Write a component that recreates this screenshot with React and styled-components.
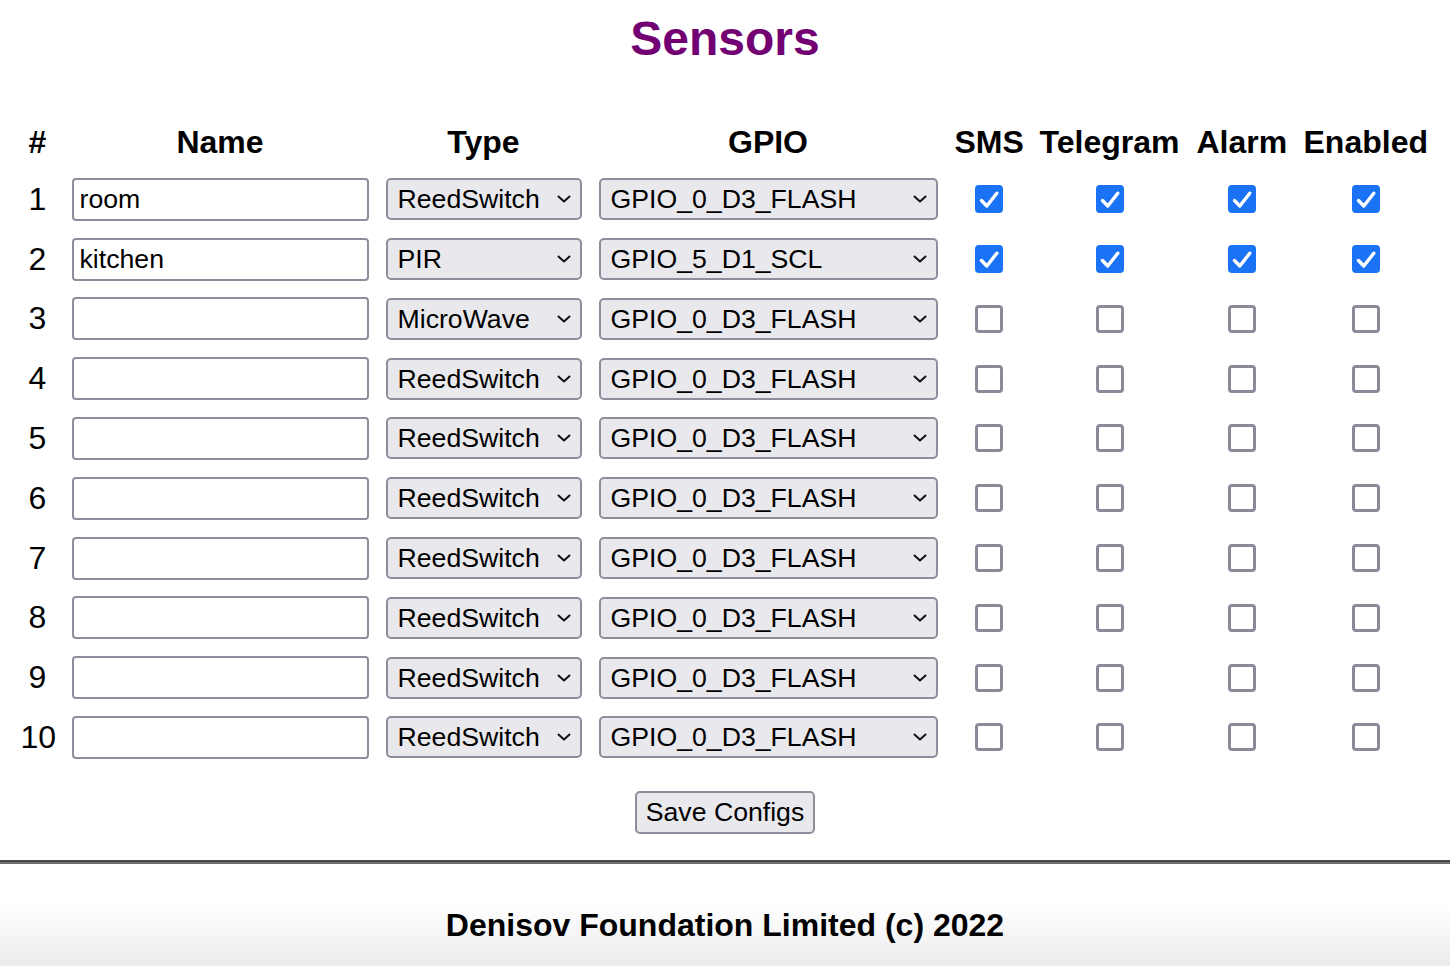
import styled, { createGlobalStyle } from 'styled-components'

const GlobalStyle = createGlobalStyle`
  body {
    margin: 0;
    background: #fff;
    font-family: "Liberation Sans", Arial, sans-serif;
    color: #000;
  }
`

const types = ['ReedSwitch', 'PIR', 'MicroWave']
const pins = ['GPIO_0_D3_FLASH', 'GPIO_5_D1_SCL', 'GPIO_4_D2_SDA', 'GPIO_12_D6', 'GPIO_13_D7', 'GPIO_14_D5']
const flags = ['SMS', 'Telegram', 'Alarm', 'Enabled']

const sensors = [
  { name: 'room', type: 'ReedSwitch', pin: 'GPIO_0_D3_FLASH', on: true },
  { name: 'kitchen', type: 'PIR', pin: 'GPIO_5_D1_SCL', on: true },
  { name: '', type: 'MicroWave', pin: 'GPIO_0_D3_FLASH', on: false },
  ...Array.from({ length: 7 }, () => ({ name: '', type: 'ReedSwitch', pin: 'GPIO_0_D3_FLASH', on: false })),
]

function Chevron() {
  return (
    <ChevronIcon width="14" height="8" viewBox="0 0 14 8">
      <path d="M1.5 1.5 L7 6.5 L12.5 1.5" fill="none" stroke="#111" strokeWidth="2" strokeLinecap="round" strokeLinejoin="round" />
    </ChevronIcon>
  )
}

function Dropdown({ options, value, width }) {
  return (
    <SelectWrap $width={width}>
      <Select defaultValue={value}>
        {options.map(o => <option key={o}>{o}</option>)}
      </Select>
      <Chevron />
    </SelectWrap>
  )
}

function Check({ checked }) {
  return (
    <CheckBox $checked={checked}>
      <input type="checkbox" defaultChecked={checked} />
      {checked && (
        <svg width="28" height="28" viewBox="0 0 28 28">
          <path d="M6.5 15.5 L11.8 21 L21.8 8.2" fill="none" stroke="#fff" strokeWidth="3.4" strokeLinecap="round" strokeLinejoin="round" />
        </svg>
      )}
    </CheckBox>
  )
}

function App() {
  return (
    <>
      <GlobalStyle />
      <Page>
        <Title>Sensors</Title>
        <Table>
          <Row>
            <Head>#</Head>
            <Head>Name</Head>
            <Head>Type</Head>
            <Head>GPIO</Head>
            {flags.map(f => <Head key={f}>{f}</Head>)}
          </Row>
          {sensors.map((s, i) => (
            <Row key={i}>
              <Num>{i + 1}</Num>
              <Cell><NameInput type="text" defaultValue={s.name} /></Cell>
              <Cell><Dropdown options={types} value={s.type} width={196} /></Cell>
              <Cell><Dropdown options={pins} value={s.pin} width={339} /></Cell>
              {flags.map(f => <Cell key={f}><Check checked={s.on} /></Cell>)}
            </Row>
          ))}
        </Table>
        <Actions>
          <SaveButton>Save Configs</SaveButton>
        </Actions>
      </Page>
      <Divider />
      <Footer>Denisov Foundation Limited (c) 2022</Footer>
    </>
  )
}

export default App

const Page = styled.div`
  padding-top: 11px;
  padding-bottom: 26px;
`

const Title = styled.h1`
  margin: 0;
  text-align: center;
  font-size: 48px;
  font-weight: bold;
  color: #720073;
  line-height: 55px;
`

const Table = styled.div`
  margin-top: 58px;
  display: flex;
  flex-direction: column;
  align-items: center;
  row-gap: 16.8px;
`

const Row = styled.div`
  display: grid;
  grid-template-columns: 34px 297px 196px 339px 68px 140px 90px 124px;
  column-gap: 17px;
  align-items: center;
  margin-left: -2px;
`

const Head = styled.div`
  text-align: center;
  font-size: 32px;
  font-weight: bold;
  line-height: 37px;
  white-space: nowrap;
`

const Cell = styled.div`
  display: flex;
  justify-content: center;
  align-items: center;
`

const Num = styled.div`
  text-align: center;
  font-size: 32px;
  line-height: 37px;
`

const NameInput = styled.input`
  box-sizing: border-box;
  width: 297px;
  height: 43px;
  margin: 0;
  padding: 0 6px;
  border: 2px solid #8f8d9b;
  border-radius: 4px;
  background: #fff;
  font-family: "Liberation Sans", Arial, sans-serif;
  font-size: 26.67px;
  color: #000;
  outline: none;
`

const SelectWrap = styled.div`
  position: relative;
  width: ${p => p.$width}px;
  height: 42px;
`

const Select = styled.select`
  appearance: none;
  box-sizing: border-box;
  width: 100%;
  height: 100%;
  margin: 0;
  padding: 0 30px 0 10px;
  border: 2px solid #8f8d9b;
  border-radius: 5px;
  background: #e9e9ed;
  font-family: "Liberation Sans", Arial, sans-serif;
  font-size: 26.67px;
  color: #000;
  outline: none;
`

const ChevronIcon = styled.svg`
  position: absolute;
  right: 11px;
  top: 17px;
  pointer-events: none;
`

const CheckBox = styled.label`
  position: relative;
  box-sizing: border-box;
  width: 28px;
  height: 28px;
  border-radius: 4px;
  border: ${p => (p.$checked ? 'none' : '3px solid #8c8a98')};
  background: ${p => (p.$checked ? '#1a72f5' : '#fff')};

  input {
    position: absolute;
    opacity: 0;
    margin: 0;
    width: 100%;
    height: 100%;
  }

  svg {
    position: absolute;
    left: 0;
    top: 0;
  }
`

const Actions = styled.div`
  display: flex;
  justify-content: center;
  margin-top: 32px;
`

const SaveButton = styled.button`
  box-sizing: border-box;
  height: 43px;
  padding: 0 9px;
  border: 2px solid #8f8d9b;
  border-radius: 5px;
  background: #e9e9ed;
  font-family: "Liberation Sans", Arial, sans-serif;
  font-size: 26.67px;
  color: #000;
`

const Divider = styled.hr`
  margin: 0;
  height: 2px;
  border: none;
  border-top: 2px solid #4a4a4a;
  background: #6e6e6e;
`

const Footer = styled.footer`
  height: 102px;
  box-sizing: border-box;
  padding-top: 43px;
  text-align: center;
  font-size: 32px;
  font-weight: bold;
  line-height: 37px;
  background: linear-gradient(to bottom, #ffffff 0%, #ffffff 40%, #ebebeb 100%);
`
